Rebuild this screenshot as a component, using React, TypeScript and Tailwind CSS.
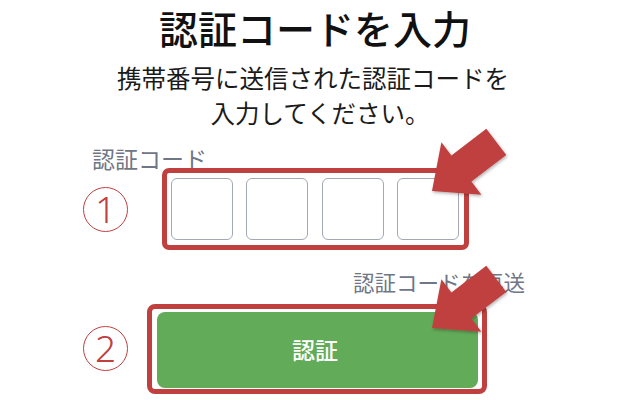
import React from 'react';

const RED = '#c0403f';

function StepMark({ n }: { n: string }) {
  return (
    <div className="flex h-[45px] w-[45px] shrink-0 items-center justify-center rounded-full border-[1.5px] border-[#c0403f] font-['Noto_Sans','Noto_Sans_CJK_JP',sans-serif] text-[37px] font-light leading-none text-[#c0403f]">
      <span className="-mt-[2px]">{n}</span>
    </div>
  );
}

function CodeBox() {
  return <div className="h-[62px] w-[62px] rounded-[6px] border-[1.5px] border-[#a4a8b5] bg-white" />;
}

function Arrow({ dy }: { dy: number }) {
  const pts = [
    [432, 191],
    [441.4, 142.3],
    [451.4, 155.4],
    [486.3, 128.7],
    [506.3, 154.9],
    [471.4, 181.6],
    [481.4, 194.7],
  ]
    .map(([x, y]) => `${x},${y + dy}`)
    .join(' ');
  return <polygon points={pts} fill={RED} filter="url(#shadow)" />;
}

export default function App() {
  return (
    <div className="relative h-[400px] w-[640px] overflow-hidden bg-white font-['Noto_Sans_CJK_JP','Noto_Sans',sans-serif]">
      <h1 className="mt-[8px] pr-[10px] text-center text-[39px] font-medium leading-none text-[#111]">
        認証コードを入力
      </h1>
      <div className="mt-[13px] text-center text-[24.5px] leading-[35px] text-[#1a1a1a]">
        <p className="pr-[14px]">携帯番号に送信された認証コードを</p>
        <p>入力してください。</p>
      </div>

      <div className="ml-[92px] mt-[17px] text-[23px] leading-none text-[#6f7686]">認証コード</div>

      <div className="-mt-[2px] ml-[83px] flex items-center gap-[34px]">
        <StepMark n="1" />
        <div className="flex w-[307px] justify-between rounded-[7px] border-[5px] border-[#c0403f] py-[5px] pl-[4px] pr-[5px]">
          <CodeBox />
          <CodeBox />
          <CodeBox />
          <CodeBox />
        </div>
      </div>

      <div className="mr-[115px] mt-[21px] text-right text-[21.5px] leading-none text-[#6f7686]">
        認証コードを再送
      </div>

      <div className="ml-[83px] mt-[11px] flex items-center gap-[19px]">
        <StepMark n="2" />
        <div className="w-[340px] rounded-[8px] border-[5px] border-[#c0403f] pb-[1px] pl-[5px] pr-[4px] pt-[3px]">
          <button className="flex h-[76px] w-full items-center justify-center rounded-[8px] bg-[#62ab59] pr-[5px] text-[23px] font-medium text-white">
            認証
          </button>
        </div>
      </div>

      <svg className="pointer-events-none absolute left-0 top-0 h-[400px] w-[640px]" viewBox="0 0 640 400">
        <defs>
          <filter id="shadow" x="-20%" y="-20%" width="140%" height="140%">
            <feDropShadow dx="1" dy="1.5" stdDeviation="1.5" floodColor="#000" floodOpacity="0.3" />
          </filter>
        </defs>
        <Arrow dy={0} />
        <Arrow dy={137} />
      </svg>
    </div>
  );
}
